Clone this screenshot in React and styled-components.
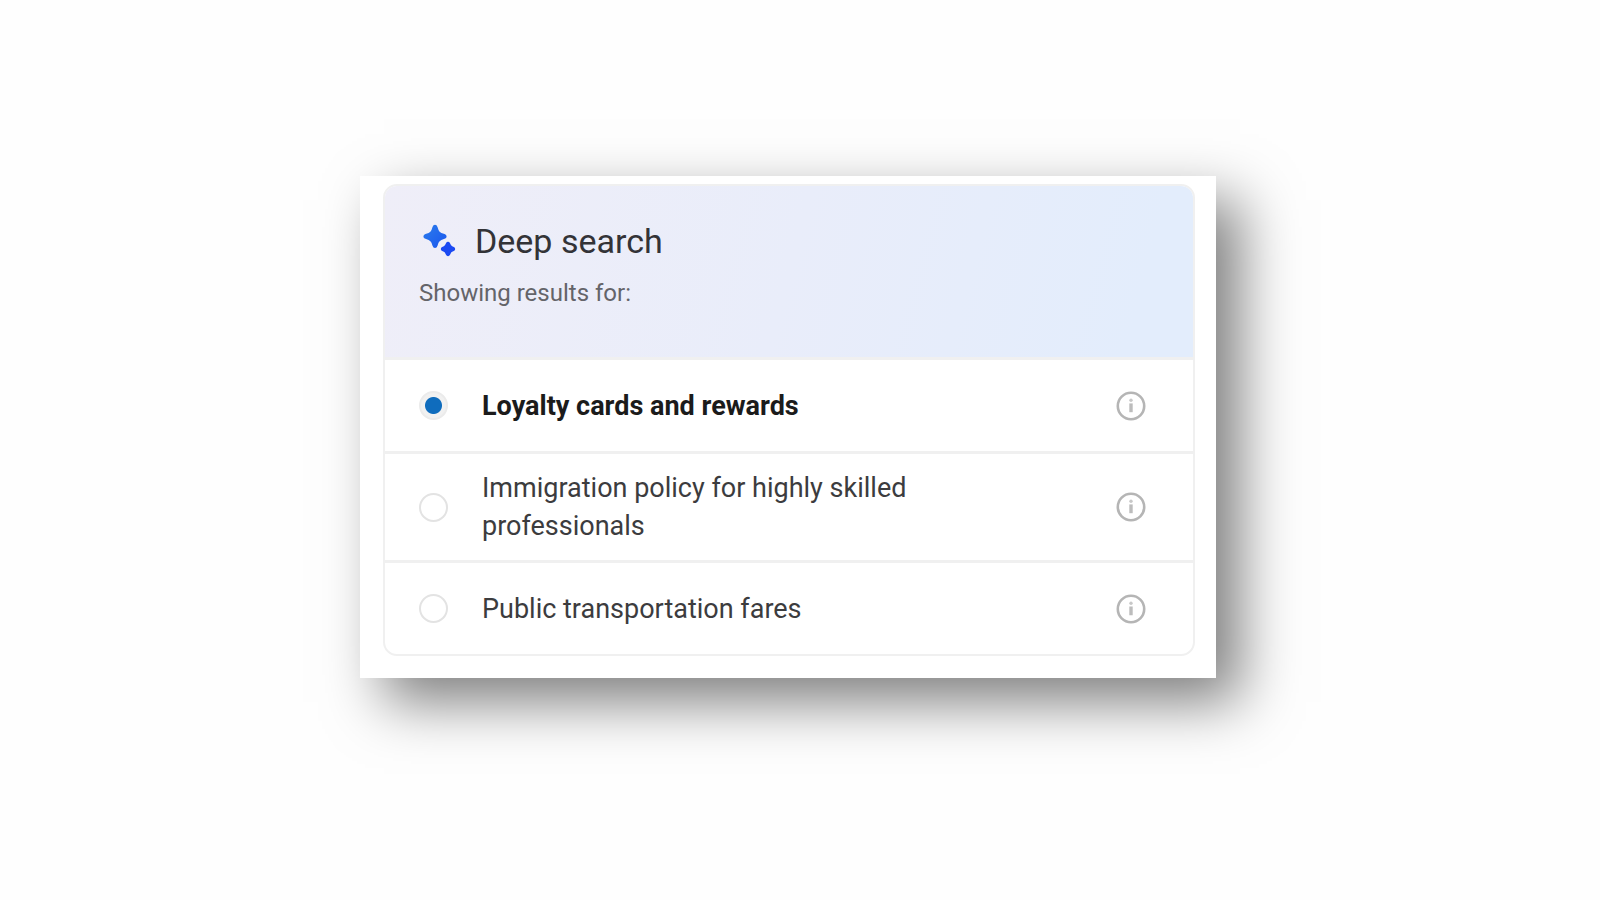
import React, { useState } from "react";
import styled, { createGlobalStyle } from "styled-components";

const GlobalStyle = createGlobalStyle`
  * {
    box-sizing: border-box;
  }
  body {
    margin: 0;
    background: #fefefe;
    font-family: Roboto, "Liberation Sans", sans-serif;
  }
`;

const Page = styled.main`
  padding: 176px 24% 96px 22.5%;
`;
const Panel = styled.section`
  padding: 8px 21px 22px 23px;
  background: #fff;
  box-shadow: 24px 24px 54px rgba(0, 0, 0, 0.5);
`;
const Card = styled.div`
  border: 2px solid #f0f0f0;
  border-radius: 14px;
  overflow: hidden;
`;
const Header = styled.header`
  height: 171px;
  padding: 35px 34px 0;
  background: linear-gradient(105deg, #efeef8 0%, #e9edfa 50%, #e3edfc 92%);
`;
const TitleRow = styled.div`
  display: flex;
  align-items: center;
  gap: 18px;
  padding-left: 4px;
`;
const Title = styled.h1`
  margin: 0;
  font-size: 34px;
  line-height: 40px;
  font-weight: 400;
  color: #333337;
`;
const Subtitle = styled.p`
  margin: 16px 0 0;
  font-size: 24px;
  line-height: 32px;
  color: #646469;
`;
const Options = styled.fieldset`
  margin: 0;
  padding: 0;
  border: 0;
  min-width: 0;
`;
const Option = styled.div`
  display: flex;
  align-items: center;
  min-height: 94px;
  padding: 15px 47px 15px 34px;
  border-top: 3px solid #f0f0f0;
`;
const Radio = styled.input`
  appearance: none;
  flex: 0 0 auto;
  width: 29px;
  height: 29px;
  margin: 0;
  border: 2px solid #e3e3e3;
  border-radius: 50%;
  background: #fff;
  cursor: pointer;
  &:checked {
    border-color: #ebebeb;
    background: radial-gradient(circle, #0f6cbd 8px, #f1f1f1 9px);
  }
`;
const OptionLabel = styled.label`
  flex: 1 1 0;
  padding: 0 48px 0 34px;
  font-size: 27px;
  line-height: 38px;
  font-weight: ${(props) => (props.$selected ? 700 : 400)};
  color: ${(props) => (props.$selected ? "#1b1b1b" : "#3c3c3e")};
  cursor: pointer;
`;
const InfoButton = styled.button`
  display: flex;
  flex: 0 0 auto;
  padding: 0;
  border: 0;
  background: none;
  cursor: pointer;
`;

function Sparkles() {
  return (
    <svg width="34" height="34" viewBox="0 0 34 34" aria-hidden="true">
      <defs>
        <linearGradient id="sparkle" x1="0" y1="0" x2="1" y2="1">
          <stop offset="0" stopColor="#2b7cec" />
          <stop offset="1" stopColor="#1a56ee" />
        </linearGradient>
      </defs>
      <path
        fill="url(#sparkle)"
        d="M12 .8Q13.8 .8 14.5 3L15.5 6Q16.3 8.1 18.4 8.9L21.6 10Q23.6 10.8 23.6 12.4Q23.6 14 21.6 14.8L18.4 15.9Q16.3 16.7 15.5 18.8L14.5 21.8Q13.8 24 12 24Q10.2 24 9.5 21.8L8.5 18.8Q7.7 16.7 5.6 15.9L2.4 14.8Q.4 14 .4 12.4Q.4 10.8 2.4 10L5.6 8.9Q7.7 8.1 8.5 6L9.5 3Q10.2 .8 12 .8Z"
      />
      <path
        fill="#1b49f2"
        d="M25 17.8Q26.4 17.8 27 19.2L27.8 20.8Q28.2 21.8 29.2 22.2L30.8 23Q32.2 23.6 32.2 25Q32.2 26.4 30.8 27L29.2 27.8Q28.2 28.2 27.8 29.2L27 30.8Q26.4 32.2 25 32.2Q23.6 32.2 23 30.8L22.2 29.2Q21.8 28.2 20.8 27.8L19.2 27Q17.8 26.4 17.8 25Q17.8 23.6 19.2 23L20.8 22.2Q21.8 21.8 22.2 20.8L23 19.2Q23.6 17.8 25 17.8Z"
      />
    </svg>
  );
}

function InfoIcon() {
  return (
    <svg width="30" height="30" viewBox="0 0 30 30" aria-hidden="true">
      <circle cx="15" cy="15" r="13.2" fill="none" stroke="#b5b5b5" strokeWidth="2.6" />
      <circle cx="15" cy="9.2" r="1.7" fill="#c8c8c8" />
      <path d="M15 12.4V21.2" stroke="#bcbcbc" strokeWidth="3.4" />
    </svg>
  );
}

const options = [
  { id: "loyalty", text: "Loyalty cards and rewards" },
  { id: "immigration", text: "Immigration policy for highly skilled professionals" },
  { id: "transport", text: "Public transportation fares" },
];

export default function App() {
  const [selected, setSelected] = useState("loyalty");

  return (
    <Page>
      <GlobalStyle />
      <Panel>
        <Card>
          <Header>
            <TitleRow>
              <Sparkles />
              <Title>Deep search</Title>
            </TitleRow>
            <Subtitle id="results-for">Showing results for:</Subtitle>
          </Header>

          {/* one row per interpretation of the query */}
          <Options aria-labelledby="results-for">
            {options.map((option) => (
              <Option key={option.id}>
                <Radio
                  type="radio"
                  name="interpretation"
                  id={option.id}
                  checked={selected === option.id}
                  onChange={() => setSelected(option.id)}
                />
                <OptionLabel htmlFor={option.id} $selected={selected === option.id}>
                  {option.text}
                </OptionLabel>
                <InfoButton type="button" aria-label={`About ${option.text}`}>
                  <InfoIcon />
                </InfoButton>
              </Option>
            ))}
          </Options>
        </Card>
      </Panel>
    </Page>
  );
}
